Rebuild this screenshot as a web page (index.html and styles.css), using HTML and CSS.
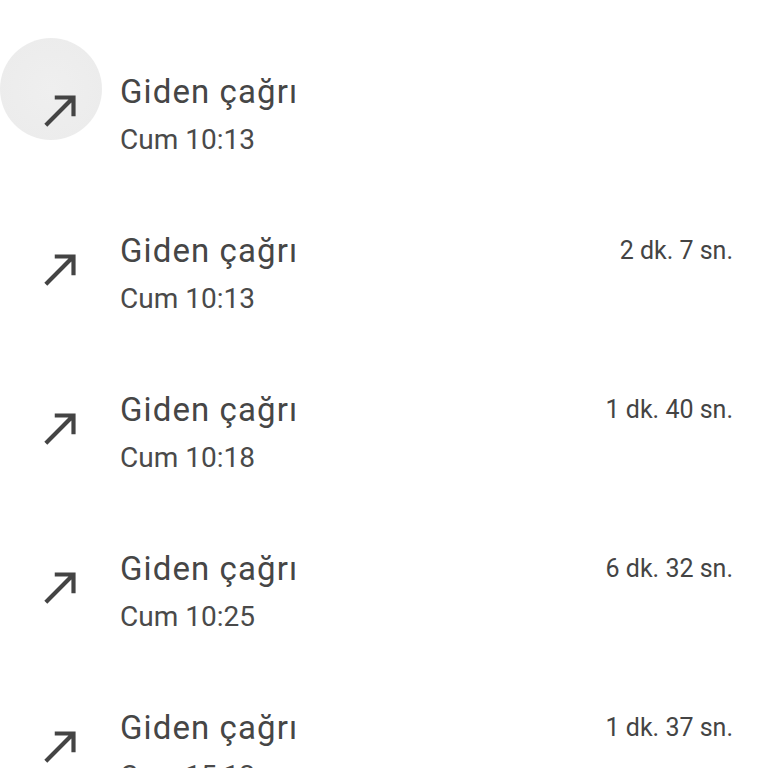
FILE: index.html
```html
<!DOCTYPE html>
<html lang="tr">
<head>
<meta charset="utf-8">
<link rel="stylesheet" href="styles.css">
</head>
<body>
<div class="list">
  <div class="ripple"></div>
  <div class="row">
    <svg class="icon" viewBox="0 0 24 24"><path d="M9 5v2h6.59L4 18.59 5.41 20 17 8.41V15h2V5z"/></svg>
    <div class="content">
      <div class="line"><span class="title">Giden çağrı</span><span class="dur"></span></div>
      <div class="sub">Cum 10:13</div>
    </div>
  </div>
  <div class="row">
    <svg class="icon" viewBox="0 0 24 24"><path d="M9 5v2h6.59L4 18.59 5.41 20 17 8.41V15h2V5z"/></svg>
    <div class="content">
      <div class="line"><span class="title">Giden çağrı</span><span class="dur">2 dk. 7 sn.</span></div>
      <div class="sub">Cum 10:13</div>
    </div>
  </div>
  <div class="row">
    <svg class="icon" viewBox="0 0 24 24"><path d="M9 5v2h6.59L4 18.59 5.41 20 17 8.41V15h2V5z"/></svg>
    <div class="content">
      <div class="line"><span class="title">Giden çağrı</span><span class="dur">1 dk. 40 sn.</span></div>
      <div class="sub">Cum 10:18</div>
    </div>
  </div>
  <div class="row">
    <svg class="icon" viewBox="0 0 24 24"><path d="M9 5v2h6.59L4 18.59 5.41 20 17 8.41V15h2V5z"/></svg>
    <div class="content">
      <div class="line"><span class="title">Giden çağrı</span><span class="dur">6 dk. 32 sn.</span></div>
      <div class="sub">Cum 10:25</div>
    </div>
  </div>
  <div class="row">
    <svg class="icon" viewBox="0 0 24 24"><path d="M9 5v2h6.59L4 18.59 5.41 20 17 8.41V15h2V5z"/></svg>
    <div class="content">
      <div class="line"><span class="title">Giden çağrı</span><span class="dur">1 dk. 37 sn.</span></div>
      <div class="sub">Cum 15:12</div>
    </div>
  </div>
</div>
</body>
</html>
```
FILE: styles.css
```css
html, body {
  margin: 0;
  padding: 0;
  background: #ffffff;
  overflow: hidden;
  height: 768px;
}
body {
  font-family: Roboto, "Noto Sans", sans-serif;
  color: #444444;
}
.list {
  position: relative;
  padding-top: 10px;
}
.ripple {
  position: absolute;
  left: 0;
  top: 38px;
  width: 102px;
  height: 102px;
  border-radius: 50%;
  background: radial-gradient(circle, #efefef 0%, #ececec 75%, #ebebeb 92%, rgba(238,238,238,0.7) 100%);
}
.row {
  position: relative;
  display: flex;
  height: 159px;
}
.icon {
  width: 50px;
  height: 50px;
  margin-left: 36px;
  margin-top: 75px;
  fill: #444444;
  flex: none;
}
.content {
  flex: 1;
  margin-left: 34px;
  padding-top: 59px;
}
.line {
  display: flex;
  justify-content: space-between;
  align-items: center;
  height: 44px;
  padding-right: 35px;
}
.title {
  font-size: 33px;
  letter-spacing: 1.1px;
  color: #464646;
}
.dur {
  font-size: 25px;
  color: #444444;
}
.sub {
  font-size: 28px;
  line-height: 40px;
  margin-top: 7px;
  color: #4a4a4a;
}
```
